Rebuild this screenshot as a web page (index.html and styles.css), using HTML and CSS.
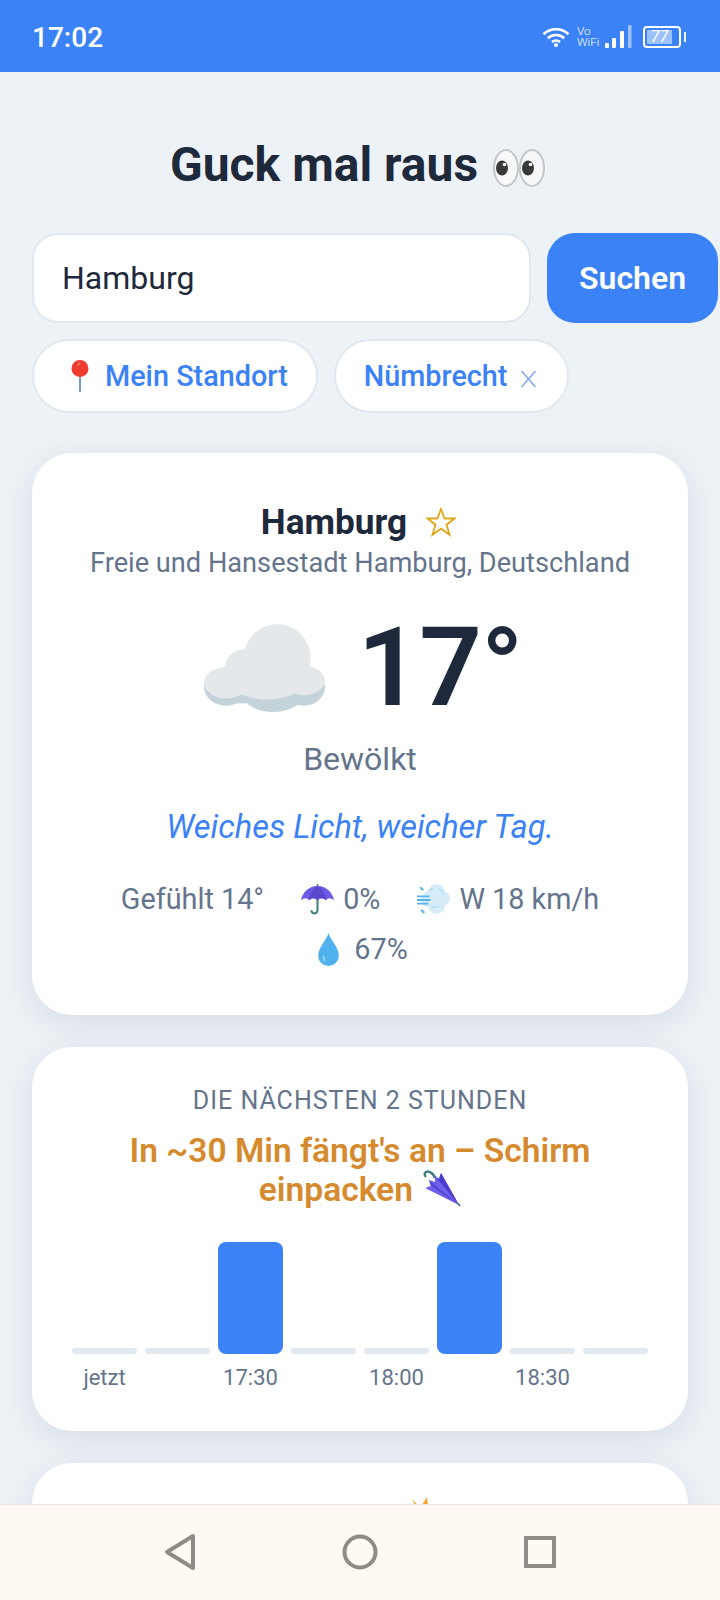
FILE: index.html
```html
<!DOCTYPE html>
<html lang="de">
<head>
<meta charset="utf-8">
<title>Guck mal raus</title>
<link rel="stylesheet" href="styles.css">
</head>
<body>
<div class="app">
  <header class="status">
    <span class="clock">17:02</span>
    <div class="status-icons">
      <svg class="wifi" viewBox="0 0 28 20"><path d="M1.5 7.2C8.5.6 19.5.6 26.5 7.2M5.8 11.2c4.600-4.200 11.800-4.200 16.400 0M10 15c2.300-1.900 5.700-1.900 8 0" fill="none" stroke="#fff" stroke-width="2.600"/><circle cx="14" cy="18" r="2" fill="#fff"/></svg>
      <span class="vowifi"><span>Vo</span><span>WiFi</span></span>
      <svg class="signal" viewBox="0 0 28 24"><rect x="1" y="18" width="4" height="5" rx="1" fill="#fff"/><rect x="8" y="13" width="4" height="10" rx="1" fill="#fff"/><rect x="16" y="6" width="4" height="17" rx="1" fill="#fff"/><rect x="24" y="0" width="3.500" height="23" rx="1" fill="#9dc1fa"/></svg>
      <div class="battery"><div class="battery-body"><span class="battery-fill">77</span></div><span class="battery-nub"></span></div>
    </div>
  </header>

  <main class="content">
    <h1 class="title">Guck mal raus <svg class="eyes" viewBox="0 0 52 38"><ellipse cx="13" cy="19" rx="12" ry="18" fill="#f7f8f8" stroke="#c4c8ca" stroke-width="2"/><ellipse cx="39" cy="19" rx="12" ry="18" fill="#f7f8f8" stroke="#c4c8ca" stroke-width="2"/><ellipse cx="9" cy="19" rx="6" ry="7.500" fill="#37393b"/><ellipse cx="35" cy="19" rx="6" ry="7.500" fill="#37393b"/><circle cx="11.500" cy="15.500" r="1.800" fill="#f7f8f8"/><circle cx="37.500" cy="15.500" r="1.800" fill="#f7f8f8"/></svg></h1>

    <form class="search">
      <input class="search-input" type="text" value="Hamburg" aria-label="Ort">
      <button class="search-btn" type="button">Suchen</button>
    </form>

    <div class="chips">
      <button class="chip" type="button">
        <svg class="pin" viewBox="0 0 18 32"><rect x="8" y="14" width="2" height="18" fill="#6f9fbd"/><circle cx="9" cy="8.500" r="8.500" fill="#ef3b30"/><path d="M6 5.500 9 3" stroke="#f98a7f" stroke-width="1.500" fill="none"/></svg>
        Mein Standort
      </button>
      <button class="chip" type="button">
        Nümbrecht
        <svg class="chip-x" viewBox="0 0 16 18"><path d="M1 1l14 16M15 1 1 17" stroke="#7fa9ec" stroke-width="1.500" fill="none"/></svg>
      </button>
    </div>

    <section class="card card-now">
      <div class="place">
        <span>Hamburg</span>
        <svg class="star" viewBox="0 0 30 30"><path d="M15 2l3.600 9.500H28.500l-8 6.200 3 10-8.500-6-8.500 6 3-10-8-6.200H11.400z" fill="none" stroke="#e0a61a" stroke-width="1.800" stroke-linejoin="miter"/></svg>
      </div>
      <p class="region">Freie und Hansestadt Hamburg, Deutschland</p>
      <div class="temp-row">
        <svg class="cloud" viewBox="0 0 119 84" preserveAspectRatio="none">
          <g fill="#c3d3d9"><ellipse cx="22" cy="60" rx="22" ry="18"/><ellipse cx="98" cy="60" rx="21" ry="18"/><ellipse cx="68" cy="68" rx="29" ry="16"/><ellipse cx="38" cy="62" rx="20" ry="14"/><ellipse cx="84" cy="64" rx="20" ry="14"/></g>
          <g fill="#e4e8eb"><circle cx="72" cy="33" r="33"/><circle cx="40" cy="44" r="20"/><ellipse cx="22" cy="56" rx="22" ry="15"/><ellipse cx="98" cy="54" rx="21" ry="14"/><ellipse cx="62" cy="55" rx="36" ry="17"/></g>
        </svg>
        <span class="temp">17°</span>
      </div>
      <p class="condition">Bewölkt</p>
      <p class="quote">Weiches Licht, weicher Tag.</p>
      <div class="meta">
        <span class="meta-item">Gefühlt 14°</span>
        <span class="meta-item"><svg class="meta-icon" viewBox="0 0 32 30"><path d="M16 14v11.500a3 3 0 0 1-6 0" fill="none" stroke="#3f7f7d" stroke-width="2"/><path d="M16 0v3" stroke="#3f7f7d" stroke-width="1.500"/><path d="M16 2C7 2 1 9 0 16c3-3 6-3 8 0 2-3 6-3 8 0 2-3 6-3 8 0 2-3 5-3 8 0-1-7-7-14-16-14z" fill="#6a5be2"/><path d="M16 2c-5 2-8 8-8 14 2-3 6-3 8 0 2-3 6-3 8 0 0-6-3-12-8-14z" fill="#5a49cf"/></svg>0%</span>
        <span class="meta-item"><svg class="meta-icon" viewBox="0 0 32 30"><g fill="#d6ecf8"><circle cx="19" cy="8" r="8"/><circle cx="25" cy="14" r="7"/><circle cx="19" cy="21" r="8"/><circle cx="12" cy="15" r="8"/></g><path d="M11 7c2-3 5-3 6-1M21 5c3 0 5 2 4 5M14 21c2 2 5 2 7 0" fill="none" stroke="#aed9ef" stroke-width="1.200"/><path d="M0 12h12M0 15.500h13M0 19h11" stroke="#55b4e8" stroke-width="1.800"/><path d="M3 3l3 3M4 25l3 3" stroke="#55b4e8" stroke-width="2"/></svg>W 18 km/h</span>
        <span class="meta-item"><svg class="drop" viewBox="0 0 20 32"><path d="M10 0C8 7 0 14 0 22a10 10 0 0 0 20 0C20 14 12 7 10 0z" fill="#4fb2ee"/><path d="M5 21c-1 3 0 6 2 7-1-3-1-5-2-7z" fill="#b3e1fa"/></svg>67%</span>
      </div>
    </section>

    <section class="card card-rain">
      <h2 class="rain-heading">DIE NÄCHSTEN 2 STUNDEN</h2>
      <p class="rain-note">In ~30 Min fängt's an – Schirm einpacken <svg class="closed-umbrella" viewBox="0 0 38 38"><path d="M12 8C10 2 4 0 2 3c-1 2 0 3 1 4" fill="none" stroke="#3f7f7d" stroke-width="2.400"/><path d="M36 35 18 3l-2 6-4-3 0 6-6-2 2 6-6 2z" fill="#6e60e8"/><path d="M36 35 18 3l-2 6-4-3z" fill="#4a3ccc"/><path d="M36 35 6 10l2 6z" fill="#5547d6"/><path d="M37 36l-2-2.500" stroke="#3f7f7d" stroke-width="2"/></svg></p>
      <div class="bars">
        <span class="bar"></span><span class="bar"></span><span class="bar bar-rain"></span><span class="bar"></span>
        <span class="bar"></span><span class="bar bar-rain"></span><span class="bar"></span><span class="bar"></span>
      </div>
      <div class="bar-labels">
        <span>jetzt</span><span></span><span>17:30</span><span></span>
        <span>18:00</span><span></span><span>18:30</span><span></span>
      </div>
    </section>

    <section class="card card-next">
      <svg class="sun" viewBox="0 0 16 8"><path d="M0 2l5.500 6H3z" fill="#f5a32a"/><path d="M15 0l-5 8h6z" fill="#f5a32a"/></svg>
    </section>
  </main>

  <nav class="navbar">
    <svg class="nav-icon" viewBox="0 0 34 38"><path d="M30 3 4 19l26 16z" fill="none" stroke="#8f8b87" stroke-width="4" stroke-linejoin="round"/></svg>
    <svg class="nav-icon" viewBox="0 0 38 38"><circle cx="19" cy="19" r="15.500" fill="none" stroke="#8f8b87" stroke-width="4"/></svg>
    <svg class="nav-icon" viewBox="0 0 38 38"><rect x="5" y="5" width="28" height="28" fill="none" stroke="#8f8b87" stroke-width="4"/></svg>
  </nav>
</div>
</body>
</html>
```

FILE: styles.css
```css
* { box-sizing: border-box; }
html, body { margin: 0; padding: 0; }
body {
  width: 720px;
  height: 1600px;
  overflow: hidden;
  background: #edf2f7;
  font-family: Roboto, "Liberation Sans", sans-serif;
  color: #1e293b;
}
p, h1, h2 { margin: 0; }
.app { display: flex; flex-direction: column; height: 1600px; overflow: hidden; }

.status {
  flex: 0 0 72px;
  display: flex;
  align-items: center;
  justify-content: space-between;
  padding: 2px 34px 0 32px;
  background: #3b82f6;
  color: #fff;
}
.clock { font-size: 28px; font-weight: 500; }
.status-icons { display: flex; align-items: center; }
.wifi { width: 28px; height: 20px; margin-right: 7px; }
.vowifi { display: flex; flex-direction: column; font-size: 11.8px; font-weight: 300; line-height: 11.5px; width: 27px; }
.signal { width: 28px; height: 24px; margin-right: 11px; }
.battery { display: flex; align-items: center; gap: 3px; }
.battery-body { width: 38px; height: 22px; border: 2px solid #fff; border-radius: 4px; padding: 2px; }
.battery-fill {
  display: block;
  width: 25px;
  height: 14px;
  background: #9dc1fa;
  color: #fff;
  font-size: 16px;
  font-style: italic;
  line-height: 14px;
  text-align: center;
}
.battery-nub { width: 2px; height: 10px; background: #e8f0fe; }

.content { flex: 1 1 0; min-height: 0; overflow: hidden; padding: 0 32px; }

.title {
  margin-top: 62px;
  height: 62px;
  padding-right: 5px;
  font-size: 48px;
  line-height: 62px;
  font-weight: 700;
  text-align: center;
  white-space: nowrap;
}
.eyes { width: 52px; height: 38px; margin-left: 3px; vertical-align: -6px; }

.search { display: flex; gap: 16px; width: 686px; margin-top: 37px; }
.search-input {
  flex: 0 0 499px;
  height: 90px;
  padding: 0 28px;
  border: 2px solid #e2e8f0;
  border-radius: 26px;
  background: #fff;
  color: #1e293b;
  font-family: inherit;
  font-size: 32px;
  outline: none;
}
.search-btn {
  flex: 0 0 171px;
  height: 90px;
  border: 0;
  border-radius: 28px;
  background: #3b82f6;
  color: #fff;
  font-family: inherit;
  font-size: 32px;
  font-weight: 600;
}

.chips { display: flex; gap: 16px; margin-top: 16px; }
.chip {
  display: flex;
  align-items: center;
  height: 74px;
  padding: 0 28px;
  border: 2px solid #e2e8f0;
  border-radius: 37px;
  background: #fff;
  color: #3b82f6;
  font-family: inherit;
  font-size: 28.8px;
  font-weight: 500;
  white-space: nowrap;
}
.pin { width: 18px; height: 32px; margin: 0 16px 0 9px; }
.chip-x { width: 17px; height: 18px; margin: 6px 2px 0 13px; }

.card {
  background: #fff;
  border-radius: 40px;
  box-shadow: 0 8px 32px rgba(30, 41, 59, 0.1);
}
.card-now { margin-top: 40px; height: 562px; padding: 49px 40px 0; text-align: center; }
.place { display: flex; justify-content: center; align-items: center; gap: 19px; height: 40px; padding-right: 3px; font-size: 35.2px; font-weight: 700; }
.star { width: 30px; height: 30px; }
.region { margin-top: 3px; font-size: 27.2px; line-height: 36px; color: #64748b; }
.temp-row { display: flex; justify-content: center; align-items: center; gap: 32px; height: 124px; margin-top: 25px; padding-left: 7px; }
.cloud { width: 121px; height: 88px; }
.temp { font-size: 110px; line-height: 124px; font-weight: 600; letter-spacing: -1px; }
.condition { margin-top: 9px; font-size: 32px; line-height: 40px; color: #64748b; }
.quote { margin-top: 26px; font-size: 32.6px; line-height: 44px; font-style: italic; color: #3b82f6; }
.meta {
  display: flex;
  flex-wrap: wrap;
  justify-content: center;
  column-gap: 37px;
  margin-top: 25px;
  font-size: 28.8px;
  line-height: 50px;
  color: #64748b;
}
.meta-item { display: flex; align-items: center; gap: 9px; }
.meta-icon { width: 33px; height: 31px; }
.drop { width: 21px; height: 33px; margin: 0 6px; }

.card-rain { margin-top: 32px; height: 384px; padding: 36px 40px 0; text-align: center; }
.rain-heading { font-size: 25px; line-height: 36px; font-weight: 400; letter-spacing: 1px; color: #64748b; }
.rain-note { margin-top: 13px; font-size: 33.6px; line-height: 38px; font-weight: 600; color: #d68a2e; }
.closed-umbrella { width: 38px; height: 38px; vertical-align: -7px; margin-left: 2px; }
.bars { display: grid; grid-template-columns: repeat(8, 1fr); gap: 8px; align-items: end; height: 112px; margin-top: 33px; }
.bar { height: 6px; border-radius: 4px; background: #e2e8f0; }
.bar-rain { height: 112px; border-radius: 8px; background: #3b82f6; }
.bar-labels { display: grid; grid-template-columns: repeat(8, 1fr); gap: 8px; margin-top: 10px; font-size: 22px; line-height: 28px; color: #64748b; }

.card-next { margin-top: 32px; height: 200px; padding: 34px 0 0 380px; }
.sun { display: block; width: 16px; height: 8px; }

.navbar {
  flex: 0 0 96px;
  display: flex;
  align-items: center;
  justify-content: center;
  gap: 142px;
  padding-bottom: 2px;
  background: #fff9f3;
  border-top: 1px solid #f0e4d8;
}
.nav-icon { width: 38px; height: 38px; }
```
